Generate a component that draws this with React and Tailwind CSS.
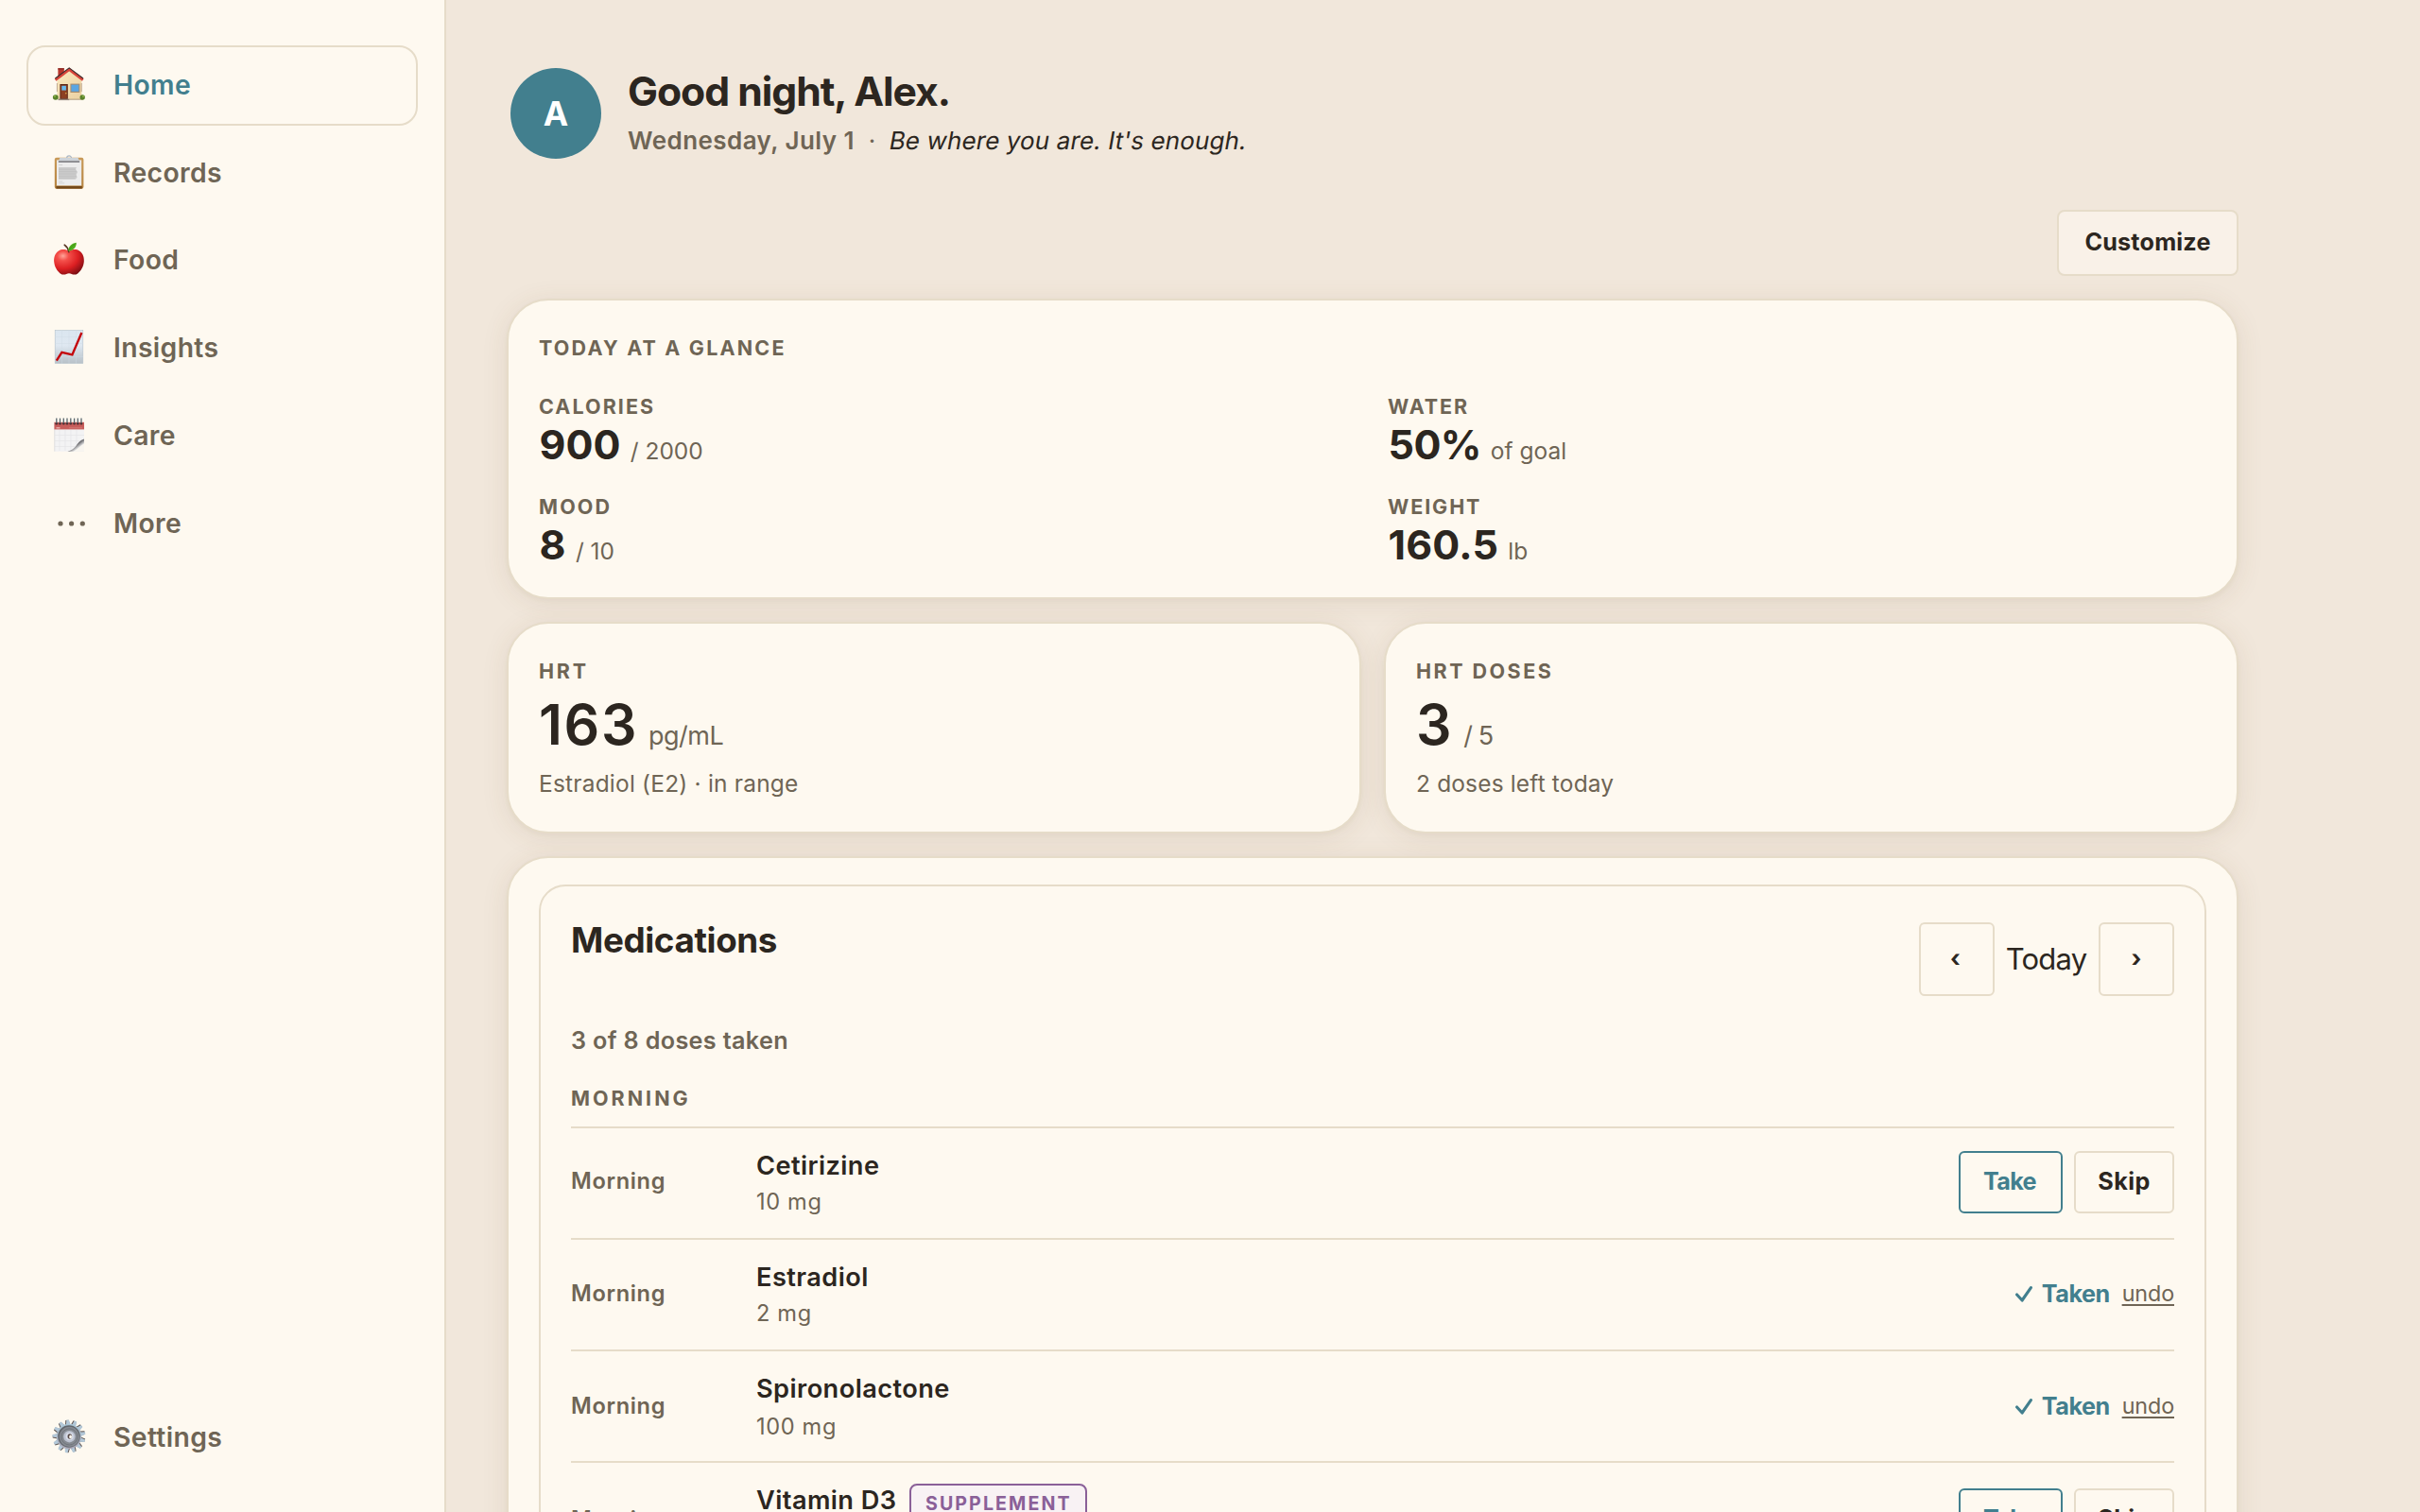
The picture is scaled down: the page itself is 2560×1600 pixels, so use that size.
function HouseIcon() {
  return (
    <svg viewBox="0 0 36 36" className="w-9 h-9">
      <defs>
        <linearGradient id="wall" x1="0" y1="0" x2="1" y2="1">
          <stop offset="0" stopColor="#fbe9bf" />
          <stop offset="1" stopColor="#ead0a2" />
        </linearGradient>
      </defs>
      <rect x="6.4" y="1.2" width="6.4" height="10" fill="#b8352c" />
      <rect x="6.4" y="1.2" width="6.4" height="1.4" fill="#8a2a24" />
      <path d="M18 3.5 5.4 14v20h26V14z" fill="url(#wall)" />
      <path d="M5.4 17v9M31.2 17v9" stroke="#b9a389" strokeWidth=".9" />
      <path d="M3.6 13.6 18.2 2.6l14.6 11" fill="none" stroke="#d8453a" strokeWidth="2.8" />
      <path d="M3.4 12 18.2.9 33 12" fill="none" stroke="#3a2a2b" strokeWidth="1.1" />
      <rect x="8.4" y="18" width="8.4" height="16" fill="#5b2413" />
      <rect x="9.4" y="19.2" width="6.4" height="14" fill="#8c4023" />
      <rect x="10.3" y="19.8" width="4.6" height="4.8" fill="#66b8ee" />
      <circle cx="14.8" cy="27.8" r=".8" fill="#e0b04c" />
      <rect x="19.4" y="17.6" width="10" height="9.4" fill="#a98b6a" />
      <rect x="20.4" y="18.6" width="8" height="7.2" fill="#5aa5e2" />
      <path d="M6.5 33.6h12v1.5h-12z" fill="#94877d" />
      <path d="M18.5 34.2h14" stroke="#a58e6e" strokeWidth=".9" />
      <ellipse cx="3.8" cy="32" rx="2.9" ry="2.7" fill="#59822b" />
      <ellipse cx="32.2" cy="32" rx="2.7" ry="2.7" fill="#59822b" />
      <circle cx="3" cy="31" r="1.1" fill="#87ae44" />
      <circle cx="33" cy="31" r="1.1" fill="#87ae44" />
    </svg>
  )
}

function ClipboardIcon() {
  return (
    <svg viewBox="0 0 36 36" className="w-9 h-9">
      <defs>
        <linearGradient id="board" x1="0" y1="0" x2="0" y2="1">
          <stop offset="0" stopColor="#c99a58" />
          <stop offset="1" stopColor="#b58340" />
        </linearGradient>
      </defs>
      <rect x="2.8" y="2.8" width="30.6" height="33" rx="2" fill="url(#board)" />
      <path d="M4.4 33h27.4v2.6H4.4z" fill="#74491a" />
      <rect x="5" y="5.4" width="26.2" height="27" fill="#ececec" />
      <path d="M15.6 3.4a2.5 2.5 0 0 1 5 0" fill="none" stroke="#a9b6c4" strokeWidth="1.1" />
      <path d="M8.4 3h19.2l1.4 3.2H7z" fill="#cdd3d8" />
      <path d="M6.8 6.2h22.4v1.8H6.8z" fill="#85858a" />
      <path d="M7.2 10.6h4" stroke="#c8c8c8" strokeWidth=".8" />
      <path d="M7 13h19l-1 2 2 3-1.4 3 1 2.4-1.6 2.4H7z" fill="#cbcbcb" />
      <path d="M7 15.2h18M7 17.6h19M7 20h18M7 22.4h19M7 24.6h17" stroke="#bcbcbc" strokeWidth=".6" />
      <path d="M7.2 28h4M7.2 29.8h6" stroke="#cfcfcf" strokeWidth=".8" />
    </svg>
  )
}

function AppleIcon() {
  return (
    <svg viewBox="0 0 36 36" className="w-9 h-9">
      <defs>
        <radialGradient id="apple" cx=".3" cy=".26" r=".85">
          <stop offset="0" stopColor="#ffa59a" />
          <stop offset=".22" stopColor="#f4504b" />
          <stop offset=".6" stopColor="#dc1f22" />
          <stop offset="1" stopColor="#740c12" />
        </radialGradient>
      </defs>
      <path
        d="M18 9.8c-3-2.2-7.6-2.6-11-.4-3.8 2.5-5.2 7-4.8 11.6.4 5 3.2 9.8 6.6 12.4 2.2 1.6 4.6 1.4 6.4.5 1.8-.8 3.8-.8 5.6 0 1.8.9 4.2 1.1 6.4-.5 3.4-2.6 6.2-7.4 6.6-12.4.4-4.6-1-9.1-4.8-11.6-3.4-2.2-8-1.8-11 .4z"
        fill="url(#apple)"
      />
      <path d="M17.8 10.6c-.6-3-2-5.6-4.6-7.4" fill="none" stroke="#55331f" strokeWidth="1.6" strokeLinecap="round" />
      <path d="M17.2 9.4c.2-4.4 3.2-7.8 8.6-8.6.2 4.6-3 8.6-8.6 8.6z" fill="#4fae1d" />
      <path d="M17.6 9c2-3 4.2-5.2 7.4-7.4" fill="none" stroke="#3a8a13" strokeWidth=".6" />
    </svg>
  )
}

function ChartIcon() {
  return (
    <svg viewBox="0 0 36 36" className="w-9 h-9">
      <defs>
        <linearGradient id="sheet" x1="0" y1="0" x2="0" y2="1">
          <stop offset="0" stopColor="#dbe6f0" />
          <stop offset=".45" stopColor="#dfe8f1" />
          <stop offset="1" stopColor="#b8c1c8" />
        </linearGradient>
      </defs>
      <rect x="3.2" y=".5" width="29.6" height="35" fill="url(#sheet)" stroke="#b4c1cb" strokeWidth=".6" />
      <path d="M3 7.5h30M3 14.5h30M3 21.5h30M3 28.5h30M10.5 0v36M18 0v36M25.5 0v36" stroke="#cfdbe6" strokeWidth=".4" />
      <path d="M4.8 32.6 10.4 23.8 21.4 26.4 31.4 3" fill="none" stroke="#c4060c" strokeWidth="2.4" />
    </svg>
  )
}

const RINGS = [4.8, 8.5, 12.3, 16, 19.8, 23.6, 27.3, 31]

function CalendarIcon() {
  return (
    <svg viewBox="0 0 36 36" className="w-9 h-9">
      <defs>
        <linearGradient id="curl" x1="0" y1="0" x2="1" y2="1">
          <stop offset=".3" stopColor="#dcdcdc" />
          <stop offset=".5" stopColor="#6c6c70" />
          <stop offset=".7" stopColor="#ededed" />
        </linearGradient>
      </defs>
      <rect x="2.4" y="5" width="31.6" height="30.7" fill="#f3f3f4" />
      <path d="M8 13v22M14 13v22M20 13v20M26 13v15M3 18.5h31M3 24.5h28M3 30.5h21" stroke="#e4e4e7" strokeWidth=".7" />
      <path d="M2.8 12v23.6" stroke="#dcdcdc" strokeWidth=".9" />
      <path d="M34 22.5c-5 1.6-6 4-8.5 7.2-2.2 2.8-5 4.9-9 6H34z" fill="url(#curl)" />
      <path d="M34 27.5c-4 2.4-5.5 5-11 8.2h11z" fill="#f9f6f0" />
      <rect x="2.4" y="4.8" width="31.6" height="7.6" fill="#c75d5b" />
      <path d="M4.5 10.8h4" stroke="#eab5b2" strokeWidth="1.3" />
      <path d="M18 10.8h14" stroke="#d47f7b" strokeWidth=".8" />
      {RINGS.map((x) => (
        <g key={x}>
          <circle cx={x} cy="6.2" r="1.3" fill="#4b2d30" />
          <path d={`M${x} .6v5.4`} stroke="#56636a" strokeWidth="1.3" />
        </g>
      ))}
    </svg>
  )
}

function DotsIcon() {
  return (
    <svg viewBox="0 0 36 36" className="w-9 h-9" fill="#6f6555">
      <circle cx="9" cy="19" r="2.6" />
      <circle cx="20.6" cy="19" r="2.6" />
      <circle cx="32.3" cy="19" r="2.6" />
    </svg>
  )
}

const TEETH = [-5, 22.7, 50.4, 78.1, 105.8, 133.5, 161.2, 188.9, 216.6, 244.3, 272, 299.7, 327.4]

function GearIcon() {
  return (
    <svg viewBox="0 0 36 36" className="w-9 h-9">
      <defs>
        <linearGradient id="gear" x1="0" y1="0" x2="0" y2="1">
          <stop offset="0" stopColor="#a9c6d6" />
          <stop offset="1" stopColor="#aca8b8" />
        </linearGradient>
      </defs>
      {TEETH.map((deg) => (
        <g key={deg} transform={`rotate(${deg} 18 18)`}>
          <path d="M15 6 15.8.8h3.2L20.400 6z" fill="#5f5450" />
          <path d="M16 6 16.800.5h2.600L20.600 6z" fill="#b3c8d8" />
        </g>
      ))}
      <circle cx="18" cy="18" r="13.2" fill="url(#gear)" />
      <circle cx="18" cy="18" r="11.8" fill="#62666c" />
      <circle cx="18.4" cy="18.4" r="10.6" fill="#858a91" />
      <circle cx="18.4" cy="18.4" r="8.6" fill="none" stroke="#6b6f76" strokeWidth=".8" />
      <circle cx="18.4" cy="18.2" r="6.2" fill="#bcc2d0" />
      <circle cx="18.6" cy="18" r="4" fill="#d9deea" />
      <ellipse cx="18.8" cy="18" rx="2.3" ry="2.8" fill="#5a4c4a" />
      <ellipse cx="19.6" cy="18.4" rx="1.4" ry="1.9" fill="#fef9f0" />
    </svg>
  )
}

const NAV_ITEMS = [
  { label: 'Home', Icon: HouseIcon, active: true },
  { label: 'Records', Icon: ClipboardIcon },
  { label: 'Food', Icon: AppleIcon },
  { label: 'Insights', Icon: ChartIcon },
  { label: 'Care', Icon: CalendarIcon },
  { label: 'More', Icon: DotsIcon },
]

const GLANCE = [
  { label: 'Calories', value: '900', unit: '/ 2000', labelTracking: 'tracking-[2.05px]', tracking: 'tracking-[0.1px]' },
  { label: 'Water', value: '50%', unit: 'of goal', labelTracking: 'tracking-[1.9px]', tracking: 'tracking-[-0.6px]' },
  { label: 'Mood', value: '8', unit: '/ 10', labelTracking: 'tracking-[2.1px]', tracking: 'tracking-[0.4px]' },
  { label: 'Weight', value: '160.5', unit: 'lb', labelTracking: 'tracking-[1.9px]', tracking: 'tracking-[0.2px]' },
]

const DOSES = [
  { name: 'Cetirizine', dose: '10 mg', time: 'Morning', taken: false, timePad: 'pb-[4px]', dosePad: '', pad: 'pb-[2px]' },
  { name: 'Estradiol', dose: '2 mg', time: 'Morning', taken: true, timePad: 'pb-[2px]', dosePad: '', pad: 'pb-[2px]' },
  { name: 'Spironolactone', dose: '100 mg', time: 'Morning', taken: true, timePad: '', dosePad: 'pt-[2px]', pad: '' },
  { name: 'Vitamin D3', dose: '2000 IU', time: 'Morning', taken: false, supplement: true, timePad: '', dosePad: 'pt-[2px]', pad: '' },
]

function NavItem({ label, Icon, active }) {
  return (
    <a
      className={`flex items-center gap-[29px] h-[84.8px] pl-[25px] rounded-[20px] border-2 ${
        active ? 'border-[#e6dcc9] text-[#427f8e]' : 'border-transparent text-[#6f6555]'
      }`}
    >
      <span className="pb-[3px]">
        <Icon />
      </span>
      <span className="pb-[1px] text-[28.3px] leading-[36px] font-semibold tracking-[0.37px]">{label}</span>
    </a>
  )
}

function Sidebar() {
  return (
    <aside className="flex flex-col w-[472px] h-full shrink-0 pt-[48px] pb-[36px] px-[28px] bg-[#fef9f0] border-r-2 border-[#e6dcc9]">
      <nav className="flex flex-col gap-2">
        {NAV_ITEMS.map((item) => (
          <NavItem key={item.label} {...item} />
        ))}
      </nav>
      <div className="mt-auto">
        <NavItem label="Settings" Icon={GearIcon} />
      </div>
    </aside>
  )
}

function Card({ className, children }) {
  return (
    <section
      className={`bg-[#fef9f0] border-2 border-[#e6dcc9] rounded-[44px] px-[32px] shadow-[0_4px_28px_rgba(110,80,40,0.1),0_2px_4px_rgba(110,80,40,0.04)] ${className}`}
    >
      {children}
    </section>
  )
}

function Label({ className, children }) {
  return <p className={`text-[21.5px] leading-[36px] font-bold uppercase text-[#6f6555] ${className}`}>{children}</p>
}

function StatCard({ label, value, unit, note, labelTracking, unitTracking, noteTracking }) {
  return (
    <Card className="h-[224px] pt-[32px]">
      <Label className={labelTracking}>{label}</Label>
      <p className="mt-[7px] flex items-baseline gap-[11px] h-[64px] leading-[64px]">
        <span className="text-[59px] font-semibold tracking-[1.6px]">{value}</span>
        <span className={`text-[27px] text-[#6f6555] ${unitTracking}`}>{unit}</span>
      </p>
      <p className={`mt-[12px] text-[24.5px] leading-[36px] text-[#6f6555] ${noteTracking}`}>{note}</p>
    </Card>
  )
}

function DoseActions({ taken }) {
  if (taken) {
    return (
      <div className="flex items-center">
        <svg viewBox="0 0 18 18" className="w-[18px] h-[18px] mr-[10px]" fill="none" stroke="#427f8e" strokeWidth="3.1" strokeLinecap="round" strokeLinejoin="round">
          <path d="M1.6 10 7.1 16 16.4 2.6" />
        </svg>
        <span className="text-[25.2px] leading-[36px] font-bold tracking-[-0.5px] text-[#427f8e]">Taken</span>
        <a className="ml-[13px] text-[23.3px] leading-[36px] tracking-[-0.1px] text-[#6f6555] underline underline-offset-[3px] decoration-2 [text-decoration-skip-ink:none]">
          undo
        </a>
      </div>
    )
  }
  return (
    <div className="flex gap-[12px]">
      <button className="w-[110px] h-[66px] rounded-[6px] border-2 border-[#427f8e] pr-[2px] text-[25.2px] font-bold tracking-[-0.7px] text-[#427f8e]">
        Take
      </button>
      <button className="w-[106px] h-[66px] rounded-[6px] border-2 border-[#e6dcc9] text-[25.2px] font-bold tracking-[0.4px]">
        Skip
      </button>
    </div>
  )
}

function DoseRow({ name, dose, time, taken, supplement, timePad, dosePad, pad }) {
  return (
    <li className={`flex items-center border-t-2 border-[#e6dcc9] ${supplement ? 'h-[122px]' : 'h-[118px]'}`}>
      <p className={`w-[196px] text-[23.6px] leading-[36px] font-semibold tracking-[0.65px] text-[#6f6555] ${timePad}`}>{time}</p>
      <div className="flex-1 self-start pt-[21px]">
        <div className="flex h-[38px]">
          <span className="text-[27.2px] leading-[38px] font-semibold tracking-[0.42px]">{name}</span>
          {supplement && (
            <span className="ml-[14px] mt-[1px] h-[40px] px-[14.5px] rounded-[8px] border-2 border-[#8a6098] bg-[#f8f2f4] text-[19.6px] leading-[38px] font-bold tracking-[2.1px] text-[#8a6098]">
              SUPPLEMENT
            </span>
          )}
        </div>
        <p className={`text-[23.6px] leading-[37px] tracking-[0.65px] text-[#6f6555] ${dosePad}`}>{dose}</p>
      </div>
      <div className={pad}>
        <DoseActions taken={taken} />
      </div>
    </li>
  )
}

function Medications() {
  return (
    <Card className="pt-[28px] pb-[28px]">
      <div className="border-2 border-[#e6dcc9] rounded-[28px] px-[32px] pt-[38px] pb-[32px]">
        <div className="flex items-start justify-between">
          <h2 className="text-[36.8px] leading-[38px] font-bold tracking-[-0.38px]">Medications</h2>
          <div className="flex items-center">
            <button className="w-[80px] h-[78px] rounded-[6px] border-2 border-[#e6dcc9] pr-[3px] text-[25.2px] font-bold">‹</button>
            <span className="w-[110px] pr-[1px] text-center text-[31px] tracking-[-0.78px]">Today</span>
            <button className="w-[80px] h-[78px] rounded-[6px] border-2 border-[#e6dcc9] text-[25.2px] font-bold">›</button>
          </div>
        </div>
        <p className="mt-[29px] text-[25.2px] leading-[36px] font-semibold tracking-[0.34px] text-[#6f6555]">3 of 8 doses taken</p>
        <Label className="mt-[25px] tracking-[3px]">Morning</Label>
        <ul className="mt-[12px]">
          {DOSES.map((d) => (
            <DoseRow key={d.name} {...d} />
          ))}
        </ul>
      </div>
    </Card>
  )
}

export default function App() {
  return (
    <div className="flex w-[2560px] h-[1600px] overflow-hidden bg-[#f1e7db] text-[#2c2620] font-['Inter',sans-serif]">
      <Sidebar />
      <main className="flex flex-col w-[1896px] pl-[64px] pt-[72px]">
        <header className="flex shrink-0 pl-[4px] gap-[28px]">
          <div className="flex items-center justify-center w-[96px] h-[96px] pt-[2px] rounded-full bg-[#427f8e] text-white text-[35.5px] font-bold">
            A
          </div>
          <div>
            <h1 className="pt-[1px] text-[42.7px] leading-[48px] font-bold tracking-[-1.05px]">Good night, Alex.</h1>
            <p className="mt-[10px] flex text-[26px] leading-[36px]">
              <span className="font-semibold tracking-[0.44px] text-[#6f6555]">Wednesday, July 1</span>
              <span className="w-[37px] text-center text-[#6f6555]">·</span>
              <em className="not-italic -skew-x-[10deg] tracking-[0.12px]">Be where you are. It's enough.</em>
            </p>
          </div>
        </header>

        <button className="shrink-0 self-end mt-[54px] w-[192px] h-[70px] rounded-[8px] border-2 border-[#e6dcc9] bg-[#f9f1e8] text-[25.2px] font-bold tracking-[0.18px]">
          Customize
        </button>

        <div className="mt-[24px] flex flex-col gap-[24px]">
          <Card className="h-[318px] pt-[32px]">
            <Label className="tracking-[2.19px]">Today at a glance</Label>
            <div className="mt-[26px] grid grid-cols-2 gap-x-[32px] gap-y-[26px]">
              {GLANCE.map((g) => (
                <div key={g.label}>
                  <Label className={g.labelTracking}>{g.label}</Label>
                  <p className="flex items-baseline gap-[10px] h-[44px] pl-[0.5px] leading-[44px]">
                    <span className={`text-[43px] font-bold ${g.tracking}`}>{g.value}</span>
                    <span className="text-[24.5px] text-[#6f6555]">{g.unit}</span>
                  </p>
                </div>
              ))}
            </div>
          </Card>

          <div className="grid grid-cols-2 gap-[24px]">
            <StatCard
              label="HRT"
              value="163"
              unit="pg/mL"
              note="Estradiol (E2) · in range"
              labelTracking="tracking-[2.8px]"
              unitTracking="tracking-[-0.5px]"
              noteTracking="tracking-[0.2px]"
            />
            <StatCard
              label="HRT Doses"
              value="3"
              unit="/ 5"
              note="2 doses left today"
              labelTracking="tracking-[2.48px]"
              unitTracking="tracking-[-0.9px]"
              noteTracking="tracking-[0.15px]"
            />
          </div>

          <Medications />
        </div>
      </main>
    </div>
  )
}
